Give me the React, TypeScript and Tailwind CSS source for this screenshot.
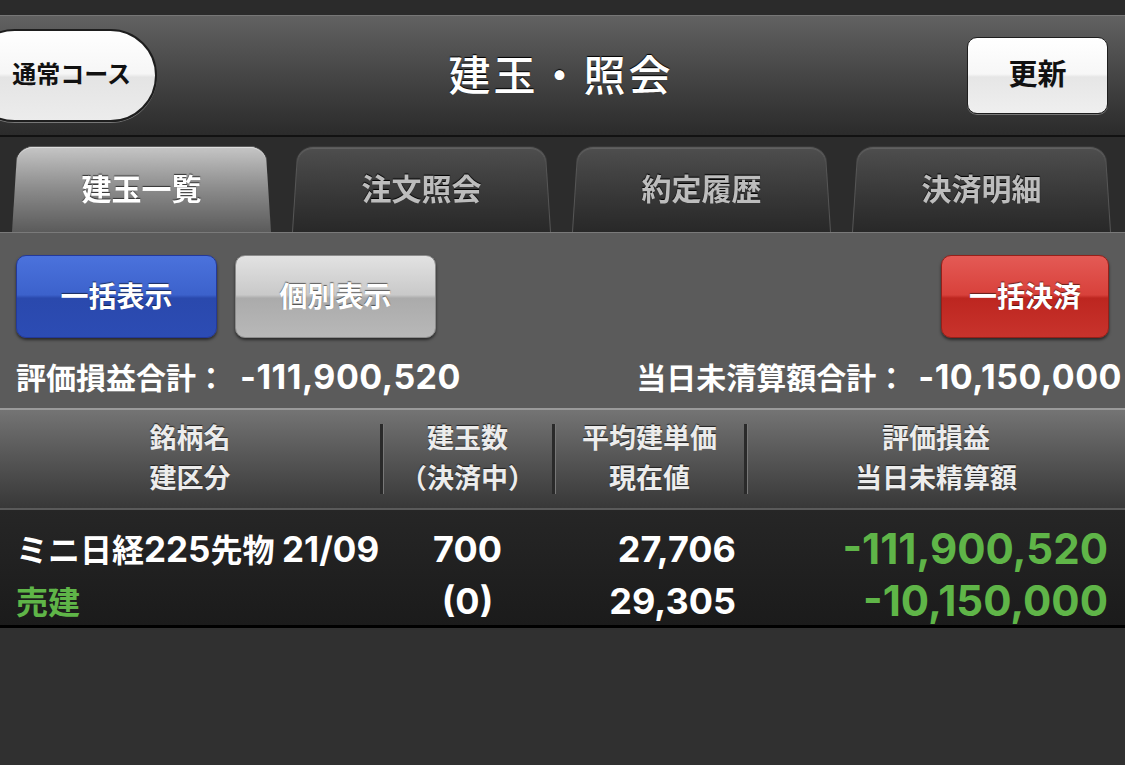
import React from "react";

const tabs = ["建玉一覧", "注文照会", "約定履歴", "決済明細"];

function Tab({ label, active }: { label: string; active: boolean }) {
  return (
    <div className="relative flex h-[84px] w-[247px] items-center justify-center">
      {/* tab body, tilted back so the bottom flares out */}
      <div
        className={`absolute inset-x-[-6px] bottom-0 h-[90px] origin-bottom rounded-t-[16px] [transform:perspective(320px)_rotateX(9deg)] ${
          active
            ? "bg-gradient-to-b from-[#c6c6c6] via-[#8c8c8c] to-[#5b5b5b] shadow-[inset_0_1px_0_#e4e4e4]"
            : "border border-b-0 border-[#555] bg-gradient-to-b from-[#4e4e4e] to-[#282828] shadow-[inset_0_1px_0_#6a6a6a]"
        }`}
      />
      <span
        className={`relative pb-[2px] text-[30px] font-bold ${
          active
            ? "text-white [text-shadow:0_-1px_1px_#333]"
            : "text-[#bdbdbd] [text-shadow:0_-1px_1px_#000]"
        }`}
      >
        {label}
      </span>
    </div>
  );
}

function GlossButton({
  label,
  tone,
  width,
}: {
  label: string;
  tone: "blue" | "gray" | "red";
  width: string;
}) {
  const toneClass =
    tone === "blue"
      ? "bg-[linear-gradient(#4b72dc,#3c62cc_48%,#2a49ad_52%,#2c4cb4)] border-[#23399a]"
      : tone === "gray"
        ? "bg-[linear-gradient(#e2e2e2,#c9c9c9_48%,#ababab_52%,#b8b8b8)] border-[#8c8c8c]"
        : "bg-[linear-gradient(#e45a55,#d8413b_48%,#bd2620_52%,#c8332c)] border-[#962019]";
  return (
    <button
      type="button"
      className={`${width} flex h-[83px] items-center justify-center rounded-[10px] border shadow-[0_2px_3px_rgba(0,0,0,0.55)] ${toneClass}`}
    >
      <span className="text-[28px] font-bold text-white [text-shadow:0_-1px_1px_rgba(0,0,0,0.55)]">
        {label}
      </span>
    </button>
  );
}

function HeaderCell({ top, bottom, width }: { top: string; bottom: string; width: string }) {
  return (
    <div className={`${width} flex flex-col items-center text-[27px] font-bold leading-[40px] text-[#ececec] [text-shadow:0_-1px_1px_#222]`}>
      <span>{top}</span>
      <span>{bottom}</span>
    </div>
  );
}

function Divider() {
  return <div className="h-[70px] w-[3px] bg-[#2a2a2a] shadow-[1px_0_0_#777]" />;
}

export default function App() {
  return (
    <div className="h-[765px] w-[1125px] overflow-hidden bg-[#303030] font-['Inter','Noto_Sans_CJK_JP',sans-serif]">
      <div className="h-[15px] bg-[#2b2b2b]" />

      {/* navigation bar */}
      <header className="flex h-[122px] items-center border-b-2 border-[#121212] bg-gradient-to-b from-[#626262] to-[#2b2b2b] shadow-[inset_0_1px_0_#777]">
        <div className="w-[155px] shrink-0">
          <button
            type="button"
            className="-ml-[32px] flex h-[93px] w-[189px] items-center justify-end rounded-full border-2 border-[#1e1e1e] bg-[linear-gradient(#ffffff,#f6f6f6_48%,#e4e4e4_52%,#ececec)] pr-[24px] shadow-[0_1px_0_#777]"
          >
            <span className="text-[24px] font-bold text-[#111]">通常コース</span>
          </button>
        </div>
        <h1 className="flex-1 text-center text-[42px] font-medium tracking-[3px] text-white [text-shadow:0_-1px_1px_#000]">
          建玉・照会
        </h1>
        <div className="w-[158px] shrink-0 pr-[17px]">
          <button
            type="button"
            className="flex h-[77px] w-[141px] items-center justify-center rounded-[10px] border border-[#1e1e1e] bg-[linear-gradient(#ffffff,#f7f7f7_48%,#e6e6e6_52%,#efefef)] shadow-[0_1px_0_#777]"
          >
            <span className="text-[29px] font-bold text-[#111]">更新</span>
          </button>
        </div>
      </header>

      {/* tabs */}
      <div className="flex h-[95px] items-end gap-[33px] bg-[#2c2c2c] pl-[18px]">
        {tabs.map((t, i) => (
          <Tab key={t} label={t} active={i === 0} />
        ))}
      </div>

      {/* summary panel */}
      <div className="h-[176px] border-t border-[#7a7a7a] bg-[#5b5b5b] px-[16px] pt-[22px]">
        <div className="flex">
          <GlossButton label="一括表示" tone="blue" width="w-[201px]" />
          <div className="w-[18px]" />
          <GlossButton label="個別表示" tone="gray" width="w-[201px]" />
          <div className="flex-1" />
          <GlossButton label="一括決済" tone="red" width="w-[168px]" />
        </div>
        <div className="mt-[19px] flex items-center justify-between text-[30px] font-bold leading-[40px] text-white">
          <div>
            評価損益合計：<span className="ml-[14px] text-[34px] tracking-[0.5px]">-111,900,520</span>
          </div>
          <div className="-mr-[13px]">
            当日未清算額合計：<span className="ml-[12px] text-[34px] tracking-[0.5px]">-10,150,000</span>
          </div>
        </div>
      </div>

      {/* table header */}
      <div className="flex h-[100px] items-center border-t-2 border-[#9a9a9a] bg-gradient-to-b from-[#747474] to-[#383838]">
        <HeaderCell top="銘柄名" bottom="建区分" width="w-[380px]" />
        <Divider />
        <HeaderCell top="建玉数" bottom="（決済中）" width="w-[169px]" />
        <Divider />
        <HeaderCell top="平均建単価" bottom="現在値" width="w-[189px]" />
        <Divider />
        <HeaderCell top="評価損益" bottom="当日未精算額" width="flex-1" />
      </div>

      {/* position row */}
      <div className="flex h-[120px] border-t-2 border-[#5a5a5a] border-b-[3px] border-b-black bg-gradient-to-b from-[#262626] to-[#1b1b1b] pt-[13px] font-bold leading-[52px] text-white">
        <div className="w-[383px] pl-[16px] text-[32px]">
          <div>
            ミニ日経<span className="text-[35px]">225</span>先物 <span className="text-[35px]">21/09</span>
          </div>
          <div className="text-[#5fb548]">売建</div>
        </div>
        <div className="w-[169px] text-center text-[36px]">
          <div>700</div>
          <div>(0)</div>
        </div>
        <div className="w-[192px] pr-[8px] text-right text-[36px]">
          <div>27,706</div>
          <div>29,305</div>
        </div>
        <div className="flex-1 pr-[17px] text-right text-[42px] text-[#5fb548]">
          <div>-111,900,520</div>
          <div>-10,150,000</div>
        </div>
      </div>
    </div>
  );
}
